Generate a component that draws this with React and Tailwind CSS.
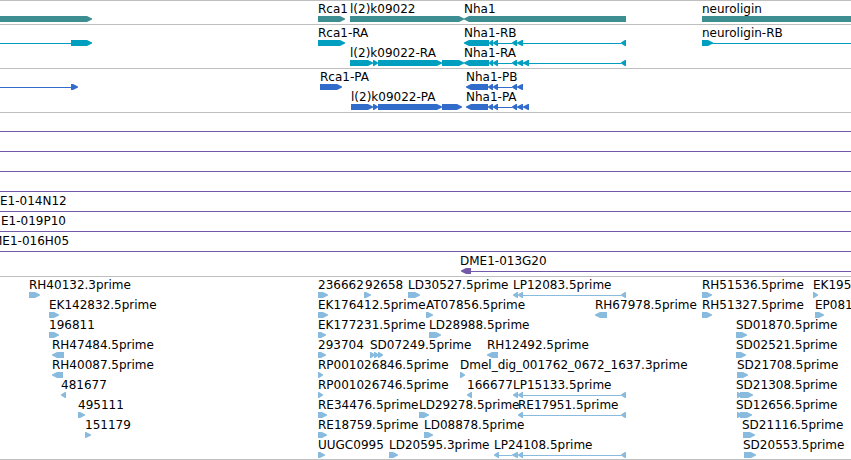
import React from 'react';

// Block kinds: '>' forward arrow, '<' reverse arrow, '=' bar without a tip, '-' connecting line.
// A block with a null end runs on past the right edge of the view.
const SPLICED = [
  [523, 621, '-'],
  [621, 626, '<'],
];
const WHOLE = [[0, null, '-']];

const TRACKS = [
  {
    name: 'Genes',
    color: '#3c8e93',
    rows: [
      [
        { at: 0, blocks: [[0, 92, '>']] },
        { label: 'Rca1', at: 318, blocks: [[318, 345, '>']] },
        { label: 'l(2)k09022', at: 350, blocks: [[350, 464, '>']] },
        { label: 'Nha1', at: 464, blocks: [[464, 626, '<']] },
        { label: 'neuroligin', at: 702, blocks: [[702, null, '=']] },
      ],
    ],
  },
  {
    name: 'Transcripts',
    color: '#009fc0',
    rows: [
      [
        { at: 0, blocks: [[0, 71, '-'], [71, 92, '>']] },
        { label: 'Rca1-RA', at: 318, blocks: [[318, 345, '>']] },
        {
          label: 'Nha1-RB',
          at: 464,
          blocks: [[464, 489, '<'], [489, 493, '<'], [493, 498, '<'], [498, 512, '-'], [512, 517, '<'], [517, 523, '<'], ...SPLICED],
        },
        { label: 'neuroligin-RB', at: 702, blocks: [[702, 713, '>'], [712, null, '-']] },
      ],
      [
        { label: 'l(2)k09022-RA', at: 350, blocks: [[350, 373, '>'], [373, 378, '>'], [378, 442, '>'], [442, 464, '>']] },
        {
          label: 'Nha1-RA',
          at: 464,
          blocks: [[464, 489, '<'], [489, 493, '<'], [493, 498, '<'], [498, 512, '-'], [512, 517, '<'], [517, 523, '<'], [523, 529, '<'], ...SPLICED],
        },
      ],
    ],
  },
  {
    name: 'Proteins',
    color: '#316ccb',
    rows: [
      [
        { at: 0, blocks: [[0, 71, '-'], [71, 78, '>']] },
        { label: 'Rca1-PA', at: 320, blocks: [[320, 342, '>']] },
        {
          label: 'Nha1-PB',
          at: 466,
          blocks: [[466, 488, '<'], [488, 493, '<'], [493, 498, '<'], [498, 512, '-'], [512, 517, '<'], [517, 523, '<']],
        },
      ],
      [
        { label: 'l(2)k09022-PA', at: 351, blocks: [[351, 373, '>'], [373, 378, '>'], [378, 442, '>'], [442, 462, '>']] },
        {
          label: 'Nha1-PA',
          at: 466,
          blocks: [[466, 488, '<'], [488, 493, '<'], [493, 498, '<'], [498, 512, '-'], [512, 517, '<'], [517, 523, '<'], [523, 529, '<']],
        },
      ],
    ],
  },
  {
    name: 'BAC ends',
    color: '#7359a9',
    rows: [
      [{ at: 0, blocks: WHOLE }],
      [{ at: 0, blocks: WHOLE }],
      [{ at: 0, blocks: WHOLE }],
      [{ at: 0, blocks: WHOLE }],
      [{ label: 'E1-014N12', at: 0, blocks: WHOLE }],
      [{ label: 'E1-019P10', at: 1, blocks: WHOLE }],
      [{ label: 'ME1-016H05', at: -8, blocks: WHOLE }],
      [{ label: 'DME1-013G20', at: 460, blocks: [[461, 471, '<'], [471, null, '-']] }],
    ],
  },
  {
    name: 'ESTs',
    color: '#88bbdd',
    rows: [
      [
        { label: 'RH40132.3prime', at: 29, blocks: [[29, 40, '>']] },
        { label: '236662', at: 318, blocks: [[318, 328, '>']] },
        { label: '92658', at: 365, blocks: [[364, 371, '>']] },
        { label: 'LD30527.5prime', at: 408, blocks: [[408, 420, '>']] },
        { label: 'LP12083.5prime', at: 513, blocks: [[513, 518, '<'], [518, 523, '<'], ...SPLICED] },
        { label: 'RH51536.5prime', at: 702, blocks: [[702, 712, '>']] },
        { label: 'EK195', at: 813, blocks: [[813, 818, '>']] },
      ],
      [
        { label: 'EK142832.5prime', at: 49, blocks: [[49, 59, '>']] },
        { label: 'EK176412.5prime', at: 318, blocks: [[318, 328, '>']] },
        { label: 'AT07856.5prime', at: 426, blocks: [[426, 433, '>']] },
        { label: 'RH67978.5prime', at: 595, blocks: [[595, 607, '<']] },
        { label: 'RH51327.5prime', at: 702, blocks: [[702, 712, '>']] },
        { label: 'EP081', at: 815, blocks: [[815, 824, '>']] },
      ],
      [
        { label: '196811', at: 49, blocks: [[49, 59, '>']] },
        { label: 'EK177231.5prime', at: 318, blocks: [[318, 326, '>']] },
        { label: 'LD28988.5prime', at: 429, blocks: [[429, 441, '>']] },
        { label: 'SD01870.5prime', at: 736, blocks: [[736, 747, '>']] },
      ],
      [
        { label: 'RH47484.5prime', at: 52, blocks: [[52, 64, '<']] },
        { label: '293704', at: 318, blocks: [[318, 326, '>']] },
        { label: 'SD07249.5prime', at: 370, blocks: [[370, 375, '>'], [374, 379, '>'], [378, 383, '>']] },
        { label: 'RH12492.5prime', at: 487, blocks: [[487, 498, '<']] },
        { label: 'SD02521.5prime', at: 736, blocks: [[736, 746, '>']] },
      ],
      [
        { label: 'RH40087.5prime', at: 52, blocks: [[52, 63, '<']] },
        { label: 'RP001026846.5prime', at: 318, blocks: [[318, 323, '>']] },
        { label: 'Dmel_dig_001762_0672_1637.3prime', at: 460, blocks: [[460, 465, '>']] },
        { label: 'SD21708.5prime', at: 737, blocks: [[737, 748, '>']] },
      ],
      [
        { label: '481677', at: 61, blocks: [[61, 66, '<']] },
        { label: 'RP001026746.5prime', at: 318, blocks: [[318, 323, '>']] },
        { label: '166677', at: 467, blocks: [[467, 472, '<']] },
        { label: 'LP15133.5prime', at: 513, blocks: [[513, 518, '<'], [518, 523, '<'], ...SPLICED] },
        { label: 'SD21308.5prime', at: 736, blocks: [[737, 742, '>'], [740, 753, '>']] },
      ],
      [
        { label: '495111', at: 78, blocks: [[78, 85, '>']] },
        { label: 'RE34476.5prime', at: 318, blocks: [[318, 327, '>']] },
        { label: 'LD29278.5prime', at: 419, blocks: [[419, 429, '>']] },
        { label: 'RE17951.5prime', at: 518, blocks: [[518, 523, '<'], ...SPLICED] },
        { label: 'SD12656.5prime', at: 736, blocks: [[737, 742, '>'], [740, 752, '>']] },
      ],
      [
        { label: '151179', at: 85, blocks: [[85, 91, '>']] },
        { label: 'RE18759.5prime', at: 318, blocks: [[318, 327, '>']] },
        { label: 'LD08878.5prime', at: 424, blocks: [[424, 433, '>']] },
        { label: 'SD21116.5prime', at: 742, blocks: [[743, 755, '>']] },
      ],
      [
        { label: 'UUGC0995', at: 318, blocks: [[318, 325, '>']] },
        { label: 'LD20595.3prime', at: 389, blocks: [[389, 398, '>']] },
        { label: 'LP24108.5prime', at: 494, blocks: [[494, 499, '<'], [499, 512, '-'], [512, 518, '<'], [518, 523, '<'], ...SPLICED] },
        { label: 'SD20553.5prime', at: 743, blocks: [[744, 756, '>']] },
      ],
    ],
  },
];

function Block({ start, end, kind }) {
  const width = end === null ? '100%' : end - start;
  if (kind === '-') return <rect x={start} y="3" width={width} height="1" />;
  if (kind === '=') return <rect x={start} y="0" width={width} height="6" />;
  const tip = Math.min(6, end - start);
  // The shoulders of a short block are as wide as the block, so it becomes a triangle.
  return kind === '>' ? (
    <polygon points={`${start},0 ${end - tip + 1},0 ${end},2.5 ${end},3.5 ${end - tip + 1},6 ${start},6`} />
  ) : (
    <polygon points={`${end},0 ${start + tip - 1},0 ${start},2.5 ${start},3.5 ${start + tip - 1},6 ${end},6`} />
  );
}

function Row({ features, color }) {
  return (
    <li className="relative flex h-5 flex-col justify-end">
      <svg className="block h-[6px] w-full" fill={color} aria-hidden="true">
        {features.flatMap((feature) =>
          feature.blocks.map(([start, end, kind]) => (
            <Block key={`${start}${kind}`} start={start} end={end} kind={kind} />
          ))
        )}
      </svg>
      {features
        .filter((feature) => feature.label)
        .map((feature) => (
          <span
            key={feature.label}
            className="absolute top-0 whitespace-nowrap text-[12px] leading-[14px]"
            style={{ left: feature.at }}
          >
            {feature.label}
          </span>
        ))}
    </li>
  );
}

export default function App() {
  return (
    <main className="w-full overflow-hidden border-b border-[#bfbfbf] bg-white font-['DejaVu_Sans',sans-serif] text-black">
      {TRACKS.map((track) => (
        <section
          key={track.name}
          aria-label={track.name}
          className="border-t border-[#bfbfbf] pt-px pb-[2px] last:pb-px"
        >
          <ul>
            {track.rows.map((features, index) => (
              <Row key={index} features={features} color={track.color} />
            ))}
          </ul>
        </section>
      ))}
    </main>
  );
}
